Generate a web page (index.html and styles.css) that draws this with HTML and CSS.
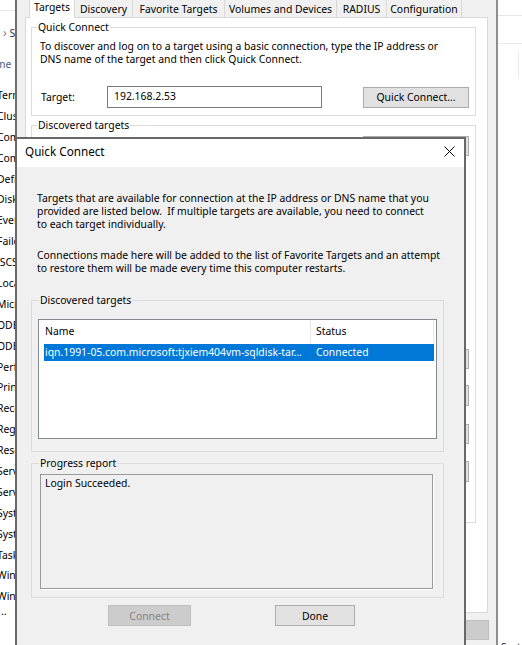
FILE: index.html
```html
<!DOCTYPE html>
<html>
<head>
<meta charset="utf-8">
<title>Quick Connect</title>
<link rel="stylesheet" href="styles.css">
</head>
<body>
<div class="screen">
  <aside class="tree">
    <div class="tree-toolbar"></div>
    <div class="tree-path"><span class="chev">›</span> S</div>
    <div class="tree-head">Name</div>
    <ul class="tree-list">
      <li>Terminal Services</li>
      <li>Cluster</li>
      <li>Component</li>
      <li>Computer</li>
      <li>Defragment</li>
      <li>Disk</li>
      <li>Event</li>
      <li>Failover</li>
      <li>iSCSI Initiator</li>
      <li>Local</li>
      <li>Microsoft</li>
      <li>ODBC</li>
      <li>ODBC</li>
      <li>Performance</li>
      <li>Print</li>
      <li>Recovery</li>
      <li>Registry</li>
      <li>Resource</li>
      <li>Services</li>
      <li>Services</li>
      <li>System</li>
      <li>System</li>
      <li>Task</li>
      <li>Windows</li>
      <li>Windows</li>
      <li class="more">..</li>
    </ul>
  </aside>

  <section class="props">
    <div class="tabs">
      <div class="tab active">Targets</div>
      <div class="tab">Discovery</div>
      <div class="tab">Favorite Targets</div>
      <div class="tab">Volumes and Devices</div>
      <div class="tab">RADIUS</div>
      <div class="tab last">Configuration</div>
    </div>
    <div class="tabpage">
      <div class="group qc-group">
        <div class="group-label">Quick Connect</div>
        <p class="qc-text">To discover and log on to a target using a basic connection, type the IP address or<br>DNS name of the target and then click Quick Connect.</p>
        <div class="target-row">
          <span class="target-label">Target:</span>
          <div class="textbox">192.168.2.53</div>
          <button class="btn qc-btn">Quick Connect...</button>
        </div>
      </div>
      <div class="group dt-group">
        <div class="group-label">Discovered targets</div>
        <div class="dt-buttons">
          <button class="btn side-btn b-refresh">Refresh</button>
          <button class="btn side-btn b1">Connect</button>
          <button class="btn side-btn b2">Disconnect</button>
          <button class="btn side-btn b3">Properties...</button>
          <button class="btn side-btn b4">Devices...</button>
        </div>
      </div>
    </div>
    <div class="props-buttons">
      <button class="btn pb">OK</button>
      <button class="btn pb">Cancel</button>
      <button class="btn pb disabled">Apply</button>
    </div>
  </section>

  <aside class="behind">
    <div class="bh-line1"></div>
    <div class="bh-line2"></div>
    <div class="bh-vline"></div>
    <div class="bh-text">System</div>
  </aside>

  <div class="dialog">
    <div class="titlebar">
      <span class="title">Quick Connect</span>
      <svg class="close" width="11" height="11" viewBox="0 0 11 11">
        <path d="M0.5 0.5 L10.5 10.5 M10.5 0.5 L0.5 10.5" stroke="#000" stroke-width="1" fill="none"/>
      </svg>
    </div>
    <div class="dlg-body">
      <p class="para p1">Targets that are available for connection at the IP address or DNS name that you<br>provided are listed below.&nbsp; If multiple targets are available, you need to connect<br>to each target individually.</p>
      <p class="para p2">Connections made here will be added to the list of Favorite Targets and an attempt<br>to restore them will be made every time this computer restarts.</p>

      <div class="group dlg-group g-list">
        <div class="group-label">Discovered targets</div>
        <div class="listview">
          <div class="lv-header">
            <div class="lv-col c-name">Name</div>
            <div class="lv-col c-status">Status</div>
          </div>
          <div class="lv-row selected">
            <div class="lv-cell c-name">iqn.1991-05.com.microsoft:tjxiem404vm-sqldisk-tar…</div>
            <div class="lv-cell c-status">Connected</div>
          </div>
        </div>
      </div>

      <div class="group dlg-group g-progress">
        <div class="group-label">Progress report</div>
        <div class="report">Login Succeeded.</div>
      </div>

      <div class="dlg-buttons">
        <button class="btn dlg-btn disabled">Connect</button>
        <button class="btn dlg-btn done">Done</button>
      </div>
    </div>
  </div>
</div>
</body>
</html>
```

FILE: styles.css
```css
* { box-sizing: border-box; }
html, body { margin: 0; padding: 0; }
body {
  width: 522px;
  height: 645px;
  overflow: hidden;
  background: #fff;
  font-family: "Noto Sans", "Open Sans", sans-serif;
  font-size: 10.4px;
  line-height: 13px;
  color: #000;
}
p { margin: 0; }
ul { margin: 0; padding: 0; list-style: none; }

.screen {
  position: relative;
  display: flex;
  width: 522px;
  height: 645px;
  overflow: hidden;
}

/* left tree behind */
.tree {
  width: 15px;
  flex: none;
  overflow: hidden;
  background: #fff;
}
.tree-toolbar {
  height: 11px;
  border-bottom: 1px solid #e6e6e6;
}
.tree-path {
  margin-top: 11px;
  line-height: 21px;
  height: 21px;
  white-space: nowrap;
  padding-left: 3px;
  color: #333;
}
.chev { color: #777; font-size: 12px; }
.tree-head {
  margin-top: 11px;
  height: 21px;
  line-height: 21px;
  white-space: nowrap;
  margin-left: -18px;
  color: #4c6080;
}
.tree-list { margin-top: 10px; }
.tree-list li {
  height: 20.9px;
  line-height: 20.9px;
  white-space: nowrap;
  margin-left: -3px;
}
.tree-list li.more { height: 10px; line-height: 8px; margin-left: 1px; }

/* properties window */
.props {
  width: 483px;
  flex: none;
  background: #f0f0f0;
  border-left: 2px solid #6d6d6d;
  border-right: 2px solid #8e8e8e;
  display: flex;
  flex-direction: column;
}
.tabs {
  display: flex;
  align-items: flex-end;
  height: 17px;
  margin-left: 12px;
  position: relative;
  z-index: 1;
}
.tab {
  height: 17px;
  padding-top: 1px;
  line-height: 16px;
  text-align: center;
  white-space: nowrap;
  background: #f0f0f0;
  border-left: 1px solid #d9d9d9;
}
.tab.last { border-right: 1px solid #d9d9d9; }
.tab.active {
  height: 18px;
  margin-bottom: -1px;
  padding-top: 0;
  line-height: 14px;
  background: #fff;
  border-right: 1px solid #d9d9d9;
}
.tab:nth-child(1) { width: 46px; }
.tab:nth-child(2) { width: 57px; border-left: none; }
.tab:nth-child(3) { width: 92px; }
.tab:nth-child(4) { width: 112px; }
.tab:nth-child(5) { width: 50px; }
.tab:nth-child(6) { width: 76px; }

.tabpage {
  margin-left: 8px;
  width: 463px;
  height: 596px;
  flex: none;
  background: #fff;
  border: 1px solid #d9d9d9;
  padding-left: 5px;
}

.group {
  border: 1px solid #dcdcdc;
  background: inherit;
}
.group-label {
  display: table;
  margin: -7px 0 0 5px;
  padding: 0 1px;
  line-height: 13px;
  background: inherit;
  white-space: nowrap;
}
.qc-group {
  margin-top: 9px;
  width: 445px;
  background: #fff;
  padding-bottom: 7px;
}
.qc-text {
  margin: 5.5px 0 0 8px;
  white-space: nowrap;
}
.target-row {
  display: flex;
  align-items: flex-start;
  margin-top: 20.5px;
}
.target-label {
  width: 66px;
  margin-left: 9px;
  padding-top: 5px;
}
.textbox {
  width: 215px;
  height: 22px;
  border: 1px solid #7a7a7a;
  background: #fff;
  padding: 3px 0 0 6px;
}
.btn {
  font: inherit;
  color: #000;
  background: #e1e1e1;
  border: 1px solid #adadad;
  padding: 0;
  margin: 0;
  text-align: center;
  white-space: nowrap;
}
.btn.disabled {
  background: #cccccc;
  border-color: #bfbfbf;
  color: #838383;
}
.qc-btn {
  width: 106px;
  height: 21px;
  margin: 1px 0 0 41px;
}
.dt-group {
  margin-top: 9px;
  width: 445px;
  height: 398px;
  background: #fff;
}
.dt-buttons {
  display: flex;
  flex-direction: column;
  margin-left: 331px;
}
.side-btn { width: 106px; height: 20px; }
.b-refresh { margin-top: 4px; }
.b1 { margin-top: 193px; }
.b2 { margin-top: 16px; height: 21px; }
.b3 { margin-top: 18px; }
.b4 { margin-top: 17px; height: 21px; }

.props-buttons {
  display: flex;
  justify-content: flex-end;
  gap: 6px;
  margin: 7px 7px 0 0;
}
.pb { width: 75px; height: 20px; }

/* right background window */
.behind {
  flex: 1;
  position: relative;
  background: #fff;
  overflow: hidden;
  display: flex;
  flex-direction: column;
}
.bh-line1 { margin-top: 15px; height: 1px; background: #e6e6e6; }
.bh-line2 { margin-top: 27px; height: 1px; background: #e9e9e9; }
.bh-vline { margin: 7px 0 0 20px; width: 1px; height: 27px; background: #ececec; }
.bh-text {
  margin-top: auto;
  margin-bottom: -9px;
  padding-left: 3px;
  white-space: nowrap;
  color: #222;
}

/* dialog */
.dialog {
  position: absolute;
  left: 15px;
  top: 137px;
  width: 451px;
  height: 530px;
  border: 2px solid #686868;
  background: #f0f0f0;
  display: flex;
  flex-direction: column;
}
.titlebar {
  height: 28px;
  flex: none;
  background: #fff;
  display: flex;
  align-items: center;
  padding-left: 8px;
  padding-bottom: 4px;
}
.title { font-size: 11.7px; }
.close { margin-left: auto; margin-right: 9px; margin-top: 0; }

.dlg-body {
  background: #f0f0f0;
  padding-left: 14px;
}
.para {
  margin-left: 6px;
  white-space: nowrap;
}
.p1 { margin-top: 24.5px; }
.p2 { margin-top: 18px; }

.dlg-group {
  width: 413px;
  background: #f0f0f0;
}
.dlg-group .group-label { margin-left: 7px; }
.g-list { margin-top: 25.5px; padding-bottom: 12px; }
.listview {
  margin: 12px 0 0 6px;
  width: 399px;
  height: 120px;
  border: 1px solid #828790;
  background: #fff;
}
.lv-header {
  display: flex;
  height: 23px;
}
.lv-col {
  line-height: 23px;
  border-right: 1px solid #e5e5e5;
}
.lv-header .c-name { width: 272px; padding-left: 6px; }
.lv-header .c-status { width: 123px; padding-left: 5px; }
.lv-row {
  display: flex;
  margin: 1px 0 0 5px;
  width: 390px;
  height: 17px;
  line-height: 17px;
}
.lv-row.selected { background: #0078d7; color: #fff; }
.lv-cell { white-space: nowrap; overflow: hidden; }
.lv-row .c-name { width: 266px; padding-left: 1px; }
.lv-row .c-status { padding-left: 6px; }

.g-progress { margin-top: 11px; height: 135px; }
.report {
  margin: 4px 0 0 8px;
  width: 393px;
  height: 115px;
  border: 1px solid #9a9a9a;
  box-shadow: 1px 1px 0 #fff;
  background: #f0f0f0;
  padding: 2px 0 0 4px;
}
.dlg-buttons {
  display: flex;
  margin: 7px 0 0 77px;
}
.dlg-btn { height: 21px; padding-top: 1px; }
.dlg-btn.disabled { width: 83px; }
.dlg-btn.done { width: 80px; margin-left: 84px; }
```
